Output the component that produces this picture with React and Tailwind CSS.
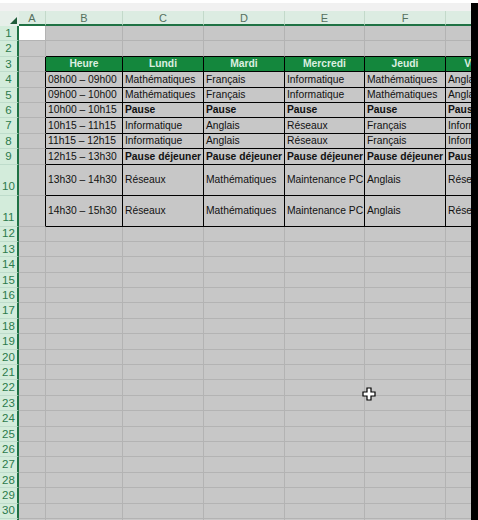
import React from "react";

const FONT = { fontFamily: '"Liberation Sans", Arial, sans-serif' };

const cols = [
  { key: "A", w: "w-[27px]" },
  { key: "B", w: "w-[77px]" },
  { key: "C", w: "w-[81px]" },
  { key: "D", w: "w-[81px]" },
  { key: "E", w: "w-[80px]" },
  { key: "F", w: "w-[81px]" },
  { key: "G", w: "w-[81px]" },
];

const header = ["Heure", "Lundi", "Mardi", "Mercredi", "Jeudi", "Vendredi"];

// rows 4..11 of the timetable
const data = {
  4: ["08h00 – 09h00", "Mathématiques", "Français", "Informatique", "Mathématiques", "Anglais"],
  5: ["09h00 – 10h00", "Mathématiques", "Français", "Informatique", "Mathématiques", "Anglais"],
  6: ["10h00 – 10h15", "Pause", "Pause", "Pause", "Pause", "Pause"],
  7: ["10h15 – 11h15", "Informatique", "Anglais", "Réseaux", "Français", "Informatique"],
  8: ["11h15 – 12h15", "Informatique", "Anglais", "Réseaux", "Français", "Informatique"],
  9: ["12h15 – 13h30", "Pause déjeuner", "Pause déjeuner", "Pause déjeuner", "Pause déjeuner", "Pause déjeuner"],
  10: ["13h30 – 14h30", "Réseaux", "Mathématiques", "Maintenance PC", "Anglais", "Réseaux"],
  11: ["14h30 – 15h30", "Réseaux", "Mathématiques", "Maintenance PC", "Anglais", "Réseaux"],
};

const boldRows = [6, 9];
const rows = Array.from({ length: 31 }, (_, i) => i + 1);

function Cell({ r, ci }) {
  const inTable = ci >= 1 && r >= 3 && r <= 11;
  const leftOfTable = ci === 0 && r >= 3 && r <= 11;
  const aboveTable = ci >= 1 && r === 2;

  let cls = "shrink-0 h-full flex items-center overflow-hidden whitespace-nowrap border-r border-b ";
  cls += cols[ci].w + " ";

  if (inTable) cls += "border-black ";
  else if (leftOfTable) cls += "border-r-black border-b-[#b3b3b3] ";
  else if (aboveTable) cls += "border-r-[#b3b3b3] border-b-black ";
  else cls += "border-[#b3b3b3] ";

  if (r === 1 && ci === 0) cls += "bg-white ";
  else if (r === 3 && ci >= 1) cls += "bg-[#14873d] ";
  else cls += "bg-[#c7c7c7] ";

  let content = null;
  if (r === 3 && ci >= 1) {
    cls += "justify-center ";
    content = (
      <span className="text-[10.3px] font-bold text-[#dcefe0]">{header[ci - 1]}</span>
    );
  } else if (data[r] && ci >= 1) {
    const bold = boldRows.includes(r) && ci >= 2;
    cls += "pl-[2px] ";
    content = (
      <span className={bold ? "text-[10.3px] font-bold text-[#111]" : "text-[10.3px] text-[#111]"}>
        {data[r][ci - 1]}
      </span>
    );
  }

  return <div className={cls}>{content}</div>;
}

export default function App() {
  return (
    <div className="relative w-[478px] h-[520px] overflow-hidden bg-white flex" style={FONT}>
      <div className="w-[471px] h-full overflow-hidden flex flex-col">
        {/* barre du haut */}
        <div className="h-[11px] shrink-0 bg-[#f1f1f1] border-t-[3px] border-white" />

        {/* en-têtes de colonnes */}
        <div className="flex h-[15px] shrink-0">
          <div className="w-[19px] shrink-0 h-full bg-[#e6efe9] flex items-end justify-end pr-[2px] pb-[2px]">
            <svg width="7" height="7" viewBox="0 0 7 7">
              <polygon points="7,0 7,7 0,7" fill="#1f5c3a" />
            </svg>
          </div>
          {cols.map((c) => (
            <div
              key={c.key}
              className={
                "shrink-0 h-full flex items-center justify-center pt-[1px] bg-[#dcece2] border-r border-r-[#c3d9ca] border-b-2 border-b-[#1f7244] text-[11px] text-[#55705e] " +
                c.w
              }
            >
              {c.key}
            </div>
          ))}
        </div>

        {/* lignes */}
        {rows.map((r) => (
          <div key={r} className={r === 10 || r === 11 ? "flex h-[31px] shrink-0" : "flex h-[15.4px] shrink-0"}>
            <div
              className={
                "w-[19px] shrink-0 h-full flex justify-center bg-[#d3ecdb] border-r-2 border-r-[#1f7244] border-b border-b-[#bedccb] text-[11.5px] leading-none text-[#2b7a4c] " +
                (r === 10 || r === 11 ? "items-end pb-[2px]" : "items-center pt-[1px]")
              }
            >
              {r}
            </div>
            {cols.map((c, ci) => (
              <Cell key={c.key} r={r} ci={ci} />
            ))}
          </div>
        ))}
      </div>

      {/* bord noir à droite */}
      <div className="w-[7px] h-full shrink-0 bg-black mt-[3px]" />

      {/* curseur */}
      <svg className="absolute left-[362px] top-[387px]" width="14" height="14" viewBox="0 0 14 14">
        <path
          d="M5 1h4v4h4v4H9v4H5V9H1V5h4z"
          fill="#ffffff"
          stroke="#000000"
          strokeWidth="1.2"
        />
      </svg>
    </div>
  );
}
